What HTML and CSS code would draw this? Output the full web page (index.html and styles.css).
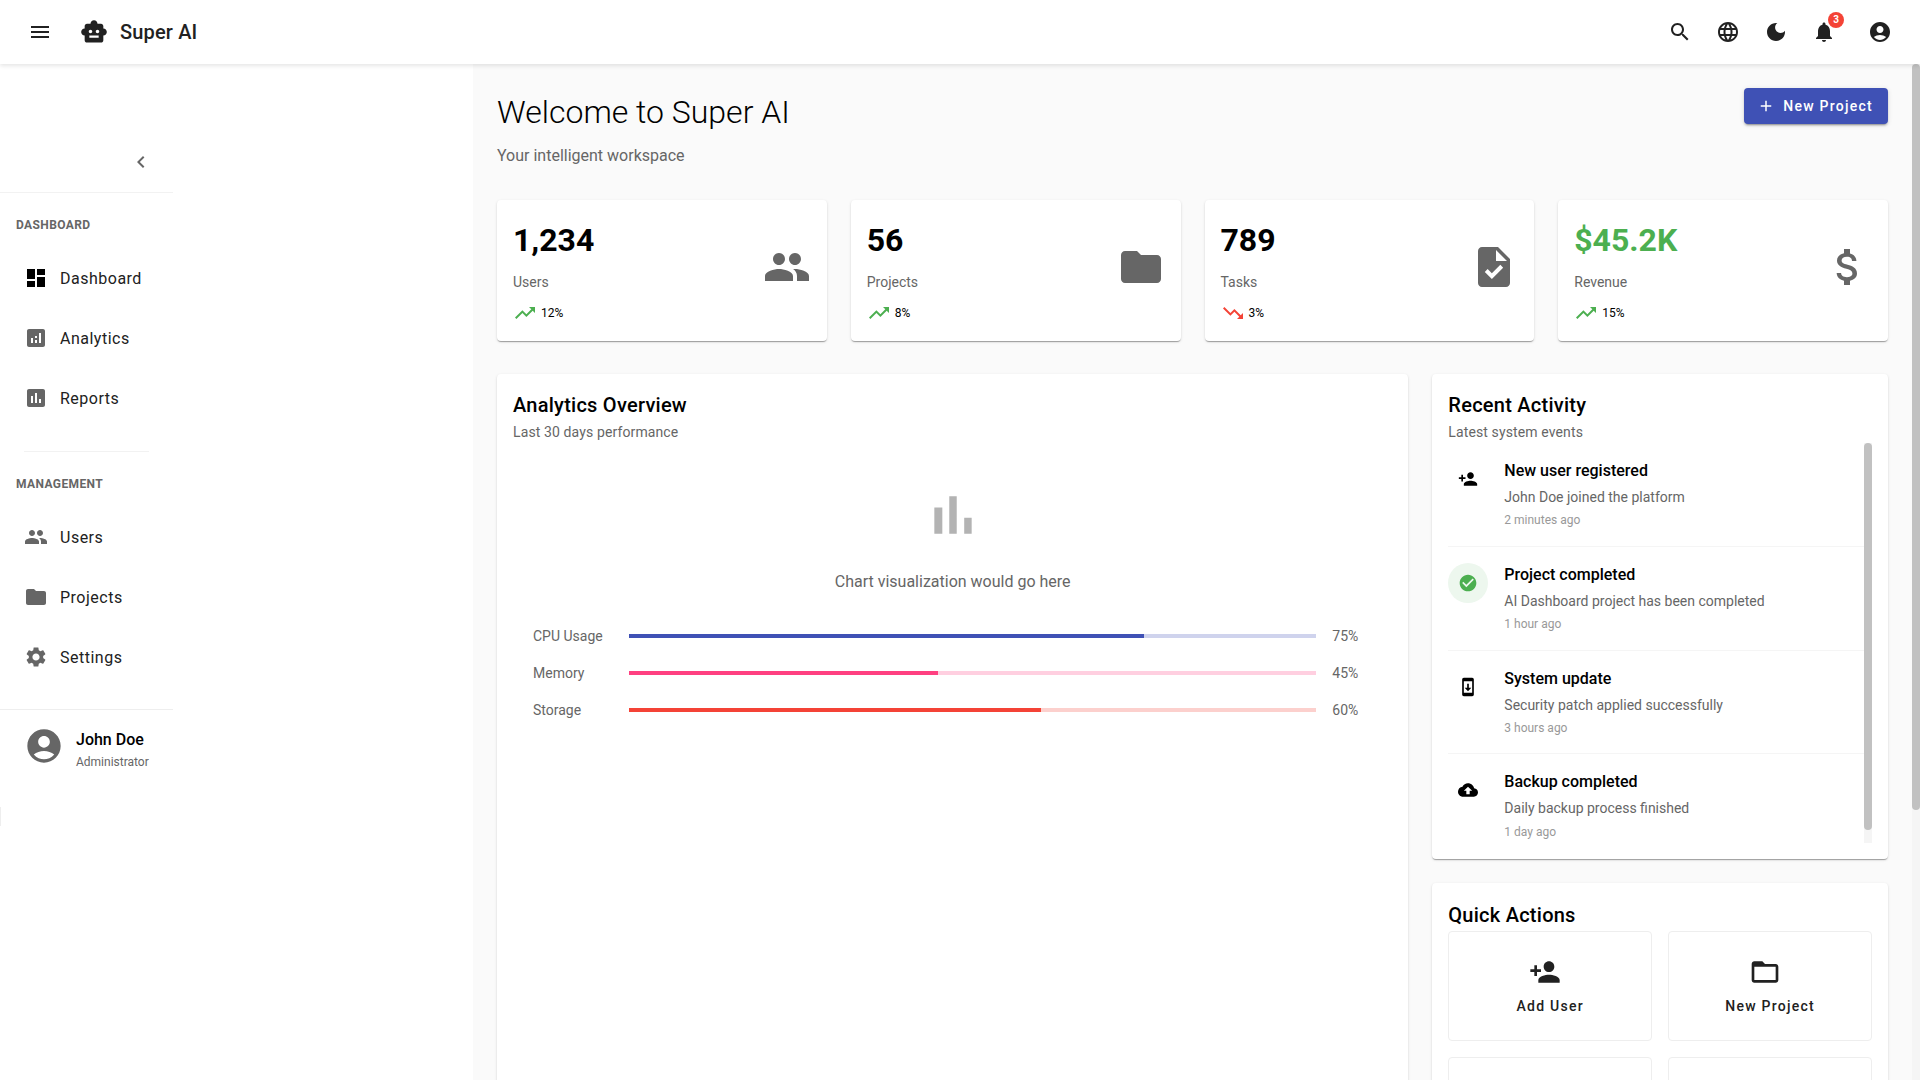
FILE: index.html
```html
<!DOCTYPE html>
<html lang="en">
<head>
    <meta charset="UTF-8">
    <meta name="viewport" content="width=device-width, initial-scale=1.0">
    <title>Super AI</title>
    <link rel="stylesheet" href="styles.css">
</head>
<body>
    <svg class="icon-defs" aria-hidden="true">
        <symbol id="i-menu" viewBox="0 0 24 24"><path d="M3 18h18v-2H3v2zm0-5h18v-2H3v2zm0-7v2h18V6H3z"/></symbol>
        <symbol id="i-robot" viewBox="0 0 24 24"><path d="M20 9V7c0-1.1-.9-2-2-2h-3c0-1.66-1.34-3-3-3S9 3.34 9 5H6c-1.1 0-2 .9-2 2v2c-1.66 0-3 1.34-3 3s1.34 3 3 3v4c0 1.1.9 2 2 2h12c1.1 0 2-.9 2-2v-4c1.66 0 3-1.34 3-3s-1.34-3-3-3zM7.5 11.5c0-.83.67-1.5 1.5-1.5s1.5.67 1.5 1.5S9.83 13 9 13s-1.5-.67-1.5-1.5zM16 17H8v-2h8v2zm-1-4c-.83 0-1.5-.67-1.5-1.5S14.17 10 15 10s1.5.67 1.5 1.5S15.83 13 15 13z"/></symbol>
        <symbol id="i-search" viewBox="0 0 24 24"><path d="M15.5 14h-.79l-.28-.27C15.41 12.59 16 11.11 16 9.5 16 5.91 13.09 3 9.5 3S3 5.91 3 9.5 5.91 16 9.5 16c1.61 0 3.09-.59 4.23-1.57l.27.28v.79l5 4.99L20.49 19l-4.99-5zm-6 0C7.01 14 5 11.99 5 9.5S7.01 5 9.5 5 14 7.01 14 9.5 11.99 14 9.5 14z"/></symbol>
        <symbol id="i-language" viewBox="0 0 24 24"><path d="M11.99 2C6.47 2 2 6.48 2 12s4.47 10 9.99 10C17.52 22 22 17.52 22 12S17.52 2 11.99 2zm6.93 6h-2.95c-.32-1.25-.78-2.45-1.38-3.56 1.84.63 3.37 1.91 4.33 3.56zM12 4.04c.83 1.2 1.48 2.53 1.91 3.96h-3.82c.43-1.43 1.08-2.76 1.91-3.96zM4.26 14C4.1 13.36 4 12.69 4 12s.1-1.36.26-2h3.38c-.08.66-.14 1.32-.14 2 0 .68.06 1.34.14 2H4.26zm.82 2h2.95c.32 1.25.78 2.45 1.38 3.56-1.84-.63-3.37-1.9-4.33-3.56zm2.95-8H5.08c.96-1.66 2.49-2.93 4.33-3.56C8.81 5.55 8.35 6.75 8.03 8zM12 19.96c-.83-1.2-1.48-2.53-1.91-3.96h3.82c-.43 1.43-1.08 2.76-1.91 3.96zM14.34 14H9.66c-.09-.66-.16-1.32-.16-2 0-.68.07-1.35.16-2h4.68c.09.65.16 1.32.16 2 0 .68-.07 1.34-.16 2zm.25 5.56c.6-1.11 1.06-2.31 1.38-3.56h2.95c-.96 1.65-2.49 2.93-4.33 3.56zM16.36 14c.08-.66.14-1.32.14-2 0-.68-.06-1.34-.14-2h3.38c.16.64.26 1.31.26 2s-.1 1.36-.26 2h-3.38z"/></symbol>
        <symbol id="i-moon" viewBox="0 0 24 24"><path d="M12 3c-4.97 0-9 4.03-9 9s4.03 9 9 9 9-4.03 9-9c0-.46-.04-.92-.1-1.36-.98 1.37-2.58 2.26-4.4 2.26-2.98 0-5.4-2.42-5.4-5.4 0-1.81.89-3.42 2.26-4.4-.44-.06-.9-.1-1.36-.1z"/></symbol>
        <symbol id="i-bell" viewBox="0 0 24 24"><path d="M12 22c1.1 0 2-.9 2-2h-4c0 1.1.89 2 2 2zm6-6v-5c0-3.07-1.64-5.64-4.5-6.32V4c0-.83-.67-1.5-1.5-1.5s-1.5.67-1.5 1.5v.68C7.63 5.36 6 7.92 6 11v5l-2 2v1h16v-1l-2-2z"/></symbol>
        <symbol id="i-account" viewBox="0 0 24 24"><path d="M12 2C6.48 2 2 6.48 2 12s4.48 10 10 10 10-4.48 10-10S17.52 2 12 2zm0 4c1.93 0 3.5 1.57 3.5 3.5S13.93 13 12 13s-3.5-1.57-3.5-3.5S10.07 6 12 6zm0 14c-2.03 0-4.43-.82-6.14-2.88C7.55 15.8 9.68 15 12 15s4.45.8 6.14 2.12C16.43 19.18 14.03 20 12 20z"/></symbol>
        <symbol id="i-chevron" viewBox="0 0 24 24"><path d="M15.41 7.41L14 6l-6 6 6 6 1.41-1.41L10.83 12z"/></symbol>
        <symbol id="i-dashboard" viewBox="0 0 24 24"><path d="M3 13h8V3H3v10zm0 8h8v-6H3v6zm10 0h8V11h-8v10zm0-18v6h8V3h-8z"/></symbol>
        <symbol id="i-analytics" viewBox="0 0 24 24"><path d="M19 3H5c-1.1 0-2 .9-2 2v14c0 1.1.9 2 2 2h14c1.1 0 2-.9 2-2V5c0-1.1-.9-2-2-2zM9 17H7v-5h2v5zm4 0h-2v-3h2v3zm0-5h-2v-2h2v2zm4 5h-2V7h2v10z"/></symbol>
        <symbol id="i-reports" viewBox="0 0 24 24"><path d="M19 3H5c-1.1 0-2 .9-2 2v14c0 1.1.9 2 2 2h14c1.1 0 2-.9 2-2V5c0-1.1-.9-2-2-2zM9 17H7v-7h2v7zm4 0h-2V7h2v10zm4 0h-2v-4h2v4z"/></symbol>
        <symbol id="i-people" viewBox="0 0 24 24"><path d="M16 11c1.66 0 2.99-1.34 2.99-3S17.66 5 16 5c-1.66 0-3 1.34-3 3s1.34 3 3 3zm-8 0c1.66 0 2.99-1.34 2.99-3S9.66 5 8 5C6.34 5 5 6.34 5 8s1.34 3 3 3zm0 2c-2.33 0-7 1.17-7 3.5V19h14v-2.5c0-2.33-4.67-3.5-7-3.5zm8 0c-.29 0-.62.02-.97.05 1.16.84 1.97 1.97 1.97 3.45V19h6v-2.5c0-2.33-4.67-3.5-7-3.5z"/></symbol>
        <symbol id="i-folder" viewBox="0 0 24 24"><path d="M10 4H4c-1.1 0-1.99.9-1.99 2L2 18c0 1.1.9 2 2 2h16c1.1 0 2-.9 2-2V8c0-1.1-.9-2-2-2h-8l-2-2z"/></symbol>
        <symbol id="i-folder-open" viewBox="0 0 24 24"><path d="M20 6h-8l-2-2H4c-1.1 0-1.99.9-1.99 2L2 18c0 1.1.9 2 2 2h16c1.1 0 2-.9 2-2V8c0-1.1-.9-2-2-2zm0 12H4V8h16v10z"/></symbol>
        <symbol id="i-settings" viewBox="0 0 24 24"><path d="M19.14 12.94c.04-.3.06-.61.06-.94 0-.32-.02-.64-.07-.94l2.03-1.58c.18-.14.23-.41.12-.61l-1.92-3.32c-.12-.22-.37-.29-.59-.22l-2.39.96c-.5-.38-1.03-.7-1.62-.94l-.36-2.54c-.04-.24-.24-.41-.48-.41h-3.84c-.24 0-.43.17-.47.41l-.36 2.54c-.59.24-1.13.57-1.62.94l-2.39-.96c-.22-.08-.47 0-.59.22L2.74 8.87c-.12.21-.08.47.12.61l2.03 1.58c-.05.3-.09.63-.09.94s.02.64.07.94l-2.03 1.58c-.18.14-.23.41-.12.61l1.92 3.32c.12.22.37.29.59.22l2.39-.96c.5.38 1.03.7 1.62.94l.36 2.54c.05.24.24.41.48.41h3.84c.24 0 .44-.17.47-.41l.36-2.54c.59-.24 1.13-.56 1.62-.94l2.39.96c.22.08.47 0 .59-.22l1.92-3.32c.12-.22.07-.47-.12-.61l-2.01-1.58zM12 15.6c-1.98 0-3.6-1.62-3.6-3.6s1.62-3.6 3.6-3.6 3.6 1.62 3.6 3.6-1.62 3.6-3.6 3.6z"/></symbol>
        <symbol id="i-up" viewBox="0 0 24 24"><path d="M16 6l2.29 2.29-4.88 4.88-4-4L2 16.59 3.41 18l6-6 4 4 6.3-6.29L22 12V6z"/></symbol>
        <symbol id="i-down" viewBox="0 0 24 24"><path d="M16 18l2.29-2.29-4.88-4.88-4 4L2 7.41 3.41 6l6 6 4-4 6.3 6.29L22 12v6z"/></symbol>
        <symbol id="i-task" viewBox="0 0 24 24"><path d="M14 2H6c-1.1 0-2 .9-2 2v16c0 1.1.89 2 1.99 2H18c1.1 0 2-.9 2-2V8l-6-6zm-3.06 16L7.4 14.46l1.41-1.41 2.12 2.12 4.24-4.24 1.41 1.41L10.94 18zM13 9V3.5L18.5 9H13z"/></symbol>
        <symbol id="i-money" viewBox="0 0 24 24"><path d="M11.8 10.9c-2.27-.59-3-1.2-3-2.15 0-1.09 1.01-1.85 2.7-1.85 1.78 0 2.44.85 2.5 2.1h2.21c-.07-1.72-1.12-3.3-3.21-3.81V3h-3v2.16c-1.94.42-3.5 1.68-3.5 3.61 0 2.31 1.91 3.46 4.7 4.13 2.5.6 3 1.48 3 2.41 0 .69-.49 1.79-2.7 1.79-2.06 0-2.87-.92-2.98-2.1h-2.2c.12 2.19 1.76 3.42 3.68 3.83V21h3v-2.15c1.95-.37 3.5-1.5 3.5-3.55 0-2.84-2.43-3.81-4.7-4.4z"/></symbol>
        <symbol id="i-bars" viewBox="0 0 24 24"><path d="M5 9.2h3V19H5zM10.6 5h2.8v14h-2.8zm5.6 8H19v6h-2.8z"/></symbol>
        <symbol id="i-person-add" viewBox="0 0 24 24"><path d="M15 12c2.21 0 4-1.79 4-4s-1.79-4-4-4-4 1.79-4 4 1.79 4 4 4zm-9-2V7H4v3H1v2h3v3h2v-3h3v-2H6zm9 4c-2.67 0-8 1.34-8 4v2h16v-2c0-2.66-5.33-4-8-4z"/></symbol>
        <symbol id="i-check" viewBox="0 0 24 24"><path d="M12 2C6.48 2 2 6.48 2 12s4.48 10 10 10 10-4.48 10-10S17.52 2 12 2zm-2 15l-5-5 1.41-1.41L10 14.17l7.59-7.59L19 8l-9 9z"/></symbol>
        <symbol id="i-update" viewBox="0 0 24 24"><path d="M17 1.01L7 1c-1.1 0-2 .9-2 2v18c0 1.1.9 2 2 2h10c1.1 0 2-.9 2-2V3c0-1.1-.9-1.99-2-1.99zM17 19H7V5h10v14zm-1-6h-3V8h-2v5H8l4 4 4-4z"/></symbol>
        <symbol id="i-backup" viewBox="0 0 24 24"><path d="M19.35 10.04C18.67 6.59 15.64 4 12 4 9.11 4 6.6 5.64 5.35 8.04 2.34 8.36 0 10.91 0 14c0 3.31 2.69 6 6 6h13c2.76 0 5-2.24 5-5 0-2.64-2.05-4.78-4.65-4.96zM14 13v4h-4v-4H7l5-5 5 5h-3z"/></symbol>
        <symbol id="i-add" viewBox="0 0 24 24"><path d="M19 13h-6v6h-2v-6H5v-2h6V5h2v6h6v2z"/></symbol>
    </svg>

    <header class="toolbar">
        <button class="icon-btn"><svg class="icon"><use href="#i-menu"/></svg></button>
        <svg class="logo"><use href="#i-robot"/></svg>
        <span class="app-name">Super AI</span>
        <div class="toolbar-actions">
            <button class="icon-btn"><svg class="icon"><use href="#i-search"/></svg></button>
            <button class="icon-btn"><svg class="icon"><use href="#i-language"/></svg></button>
            <button class="icon-btn"><svg class="icon"><use href="#i-moon"/></svg></button>
            <button class="icon-btn">
                <svg class="icon"><use href="#i-bell"/></svg>
                <span class="badge">3</span>
            </button>
            <button class="icon-btn account-btn"><svg class="icon"><use href="#i-account"/></svg></button>
        </div>
    </header>

    <div class="layout">
        <aside class="sidebar">
            <div class="sidebar-inner">
                <div class="sidebar-top">
                    <svg class="icon chevron"><use href="#i-chevron"/></svg>
                </div>

                <div class="nav-label first">Dashboard</div>
                <a class="nav-item active"><svg class="icon"><use href="#i-dashboard"/></svg>Dashboard</a>
                <a class="nav-item"><svg class="icon"><use href="#i-analytics"/></svg>Analytics</a>
                <a class="nav-item"><svg class="icon"><use href="#i-reports"/></svg>Reports</a>

                <div class="nav-divider"></div>

                <div class="nav-label">Management</div>
                <a class="nav-item"><svg class="icon"><use href="#i-people"/></svg>Users</a>
                <a class="nav-item"><svg class="icon"><use href="#i-folder"/></svg>Projects</a>
                <a class="nav-item"><svg class="icon"><use href="#i-settings"/></svg>Settings</a>

                <div class="user-box">
                    <svg class="avatar"><use href="#i-account"/></svg>
                    <div class="user-text">
                        <div class="user-name">John Doe</div>
                        <div class="user-role">Administrator</div>
                    </div>
                </div>
            </div>
            <div class="sidebar-edge"></div>
        </aside>

        <main class="main">
            <div class="main-inner">
                <div class="page-header">
                    <div>
                        <h1>Welcome to Super AI</h1>
                        <p class="page-sub">Your intelligent workspace</p>
                    </div>
                    <button class="primary-btn"><svg class="btn-icon"><use href="#i-add"/></svg>New Project</button>
                </div>

                <div class="stats">
                    <div class="card stat-card">
                        <div>
                            <div class="stat-value">1,234</div>
                            <div class="stat-label">Users</div>
                            <div class="stat-trend"><svg class="icon up"><use href="#i-up"/></svg>12%</div>
                        </div>
                        <svg class="stat-icon"><use href="#i-people"/></svg>
                    </div>
                    <div class="card stat-card">
                        <div>
                            <div class="stat-value">56</div>
                            <div class="stat-label">Projects</div>
                            <div class="stat-trend"><svg class="icon up"><use href="#i-up"/></svg>8%</div>
                        </div>
                        <svg class="stat-icon"><use href="#i-folder"/></svg>
                    </div>
                    <div class="card stat-card">
                        <div>
                            <div class="stat-value">789</div>
                            <div class="stat-label">Tasks</div>
                            <div class="stat-trend"><svg class="icon down"><use href="#i-down"/></svg>3%</div>
                        </div>
                        <svg class="stat-icon"><use href="#i-task"/></svg>
                    </div>
                    <div class="card stat-card">
                        <div>
                            <div class="stat-value green">$45.2K</div>
                            <div class="stat-label">Revenue</div>
                            <div class="stat-trend"><svg class="icon up"><use href="#i-up"/></svg>15%</div>
                        </div>
                        <svg class="stat-icon"><use href="#i-money"/></svg>
                    </div>
                </div>

                <div class="dash-grid">
                    <section class="card panel">
                        <h2>Analytics Overview</h2>
                        <p class="panel-sub">Last 30 days performance</p>
                        <div class="chart-empty">
                            <svg class="chart-icon"><use href="#i-bars"/></svg>
                            <p>Chart visualization would go here</p>
                        </div>
                        <div class="metrics">
                            <span>CPU Usage</span>
                            <div class="track blue"><div class="fill" style="width: 75%"></div></div>
                            <span>75%</span>
                            <span>Memory</span>
                            <div class="track pink"><div class="fill" style="width: 45%"></div></div>
                            <span>45%</span>
                            <span>Storage</span>
                            <div class="track red"><div class="fill" style="width: 60%"></div></div>
                            <span>60%</span>
                        </div>
                    </section>

                    <div class="side-col">
                        <section class="card panel">
                            <h2>Recent Activity</h2>
                            <p class="panel-sub">Latest system events</p>
                            <div class="activity-wrap">
                                <ul class="activity">
                                    <li>
                                        <span class="activity-icon"><svg><use href="#i-person-add"/></svg></span>
                                        <div>
                                            <div class="activity-title">New user registered</div>
                                            <div class="activity-desc">John Doe joined the platform</div>
                                            <div class="activity-time">2 minutes ago</div>
                                        </div>
                                    </li>
                                    <li>
                                        <span class="activity-icon done"><svg><use href="#i-check"/></svg></span>
                                        <div>
                                            <div class="activity-title">Project completed</div>
                                            <div class="activity-desc">AI Dashboard project has been completed</div>
                                            <div class="activity-time">1 hour ago</div>
                                        </div>
                                    </li>
                                    <li>
                                        <span class="activity-icon"><svg><use href="#i-update"/></svg></span>
                                        <div>
                                            <div class="activity-title">System update</div>
                                            <div class="activity-desc">Security patch applied successfully</div>
                                            <div class="activity-time">3 hours ago</div>
                                        </div>
                                    </li>
                                    <li>
                                        <span class="activity-icon"><svg><use href="#i-backup"/></svg></span>
                                        <div>
                                            <div class="activity-title">Backup completed</div>
                                            <div class="activity-desc">Daily backup process finished</div>
                                            <div class="activity-time">1 day ago</div>
                                        </div>
                                    </li>
                                </ul>
                                <div class="scrollbar"><div class="thumb list-thumb"></div></div>
                            </div>
                        </section>

                        <section class="card panel quick">
                            <h2>Quick Actions</h2>
                            <div class="actions">
                                <button class="action"><svg><use href="#i-person-add"/></svg>Add User</button>
                                <button class="action"><svg><use href="#i-folder-open"/></svg>New Project</button>
                                <button class="action"></button>
                                <button class="action"></button>
                            </div>
                        </section>
                    </div>
                </div>
            </div>
        </main>
        <div class="scrollbar"><div class="thumb page-thumb"></div></div>
    </div>
</body>
</html>
```

FILE: styles.css
```css
* {
    box-sizing: border-box;
}

body {
    margin: 0;
    height: 100vh;
    overflow: hidden;
    display: flex;
    flex-direction: column;
    font-family: Roboto, Arial, sans-serif;
    color: #212121;
    background-color: #fafafa;
}

h1, h2, p, ul {
    margin: 0;
    padding: 0;
}

button {
    font-family: inherit;
    border: none;
    background: none;
    padding: 0;
    color: inherit;
}

.icon-defs {
    display: none;
}

.icon {
    width: 24px;
    height: 24px;
    fill: currentColor;
    flex-shrink: 0;
}

/* drawn scrollbars */
.scrollbar {
    width: 8px;
    flex-shrink: 0;
    background-color: #f5f5f5;
}

.thumb {
    background-color: #c1c1c1;
    border-radius: 4px;
}

.page-thumb {
    height: 746px;
}

.list-thumb {
    height: 387px;
}

/* toolbar */
.toolbar {
    position: relative;
    z-index: 2;
    display: flex;
    align-items: center;
    flex-shrink: 0;
    height: 64px;
    padding: 0 16px;
    background-color: #fff;
    box-shadow: 0 2px 4px rgba(0, 0, 0, 0.1);
}

.icon-btn {
    position: relative;
    display: flex;
    align-items: center;
    justify-content: center;
    width: 48px;
    height: 48px;
}

.logo {
    width: 28px;
    height: 28px;
    fill: #212121;
    margin-left: 16px;
}

.app-name {
    margin-left: 12px;
    font-size: 20px;
    font-weight: 500;
    letter-spacing: 0.15px;
}

.toolbar-actions {
    display: flex;
    margin-left: auto;
}

.account-btn {
    margin-left: 8px;
}

.badge {
    position: absolute;
    top: 4px;
    right: 4px;
    width: 16px;
    height: 16px;
    border-radius: 50%;
    background-color: #f44336;
    color: #fff;
    font-size: 10px;
    font-weight: 700;
    line-height: 16px;
    text-align: center;
}

/* sidebar */
.layout {
    display: flex;
    flex: 1;
    min-height: 0;
}

.sidebar {
    position: relative;
    width: 473px;
    flex-shrink: 0;
    background-color: #fff;
}

.sidebar-inner {
    width: 173px;
}

.sidebar-edge {
    position: absolute;
    left: 0;
    top: 743px;
    width: 1px;
    height: 19px;
    background-color: #eee;
}

.sidebar-top {
    display: flex;
    justify-content: flex-end;
    align-items: flex-end;
    height: 129px;
    padding: 0 20px 18px 0;
    border-bottom: 1px solid #f2f2f2;
}

.chevron {
    color: #666;
}

.nav-label {
    margin: 24px 0 15px;
    padding-left: 16px;
    font-size: 12px;
    font-weight: 700;
    line-height: 16px;
    letter-spacing: 0.4px;
    color: #666;
    text-transform: uppercase;
}

.nav-item {
    display: flex;
    align-items: center;
    gap: 12px;
    height: 60px;
    padding-left: 24px;
    font-size: 16px;
    letter-spacing: 0.5px;
    color: #212121;
}

.nav-item .icon {
    color: #666;
}

.nav-item.active .icon {
    color: #000;
}

.nav-divider {
    height: 1px;
    margin: 23px 24px 0;
    background-color: #f2f2f2;
}

.user-box {
    display: flex;
    align-items: flex-start;
    gap: 12px;
    margin-top: 22px;
    padding: 16px 0 16px 24px;
    border-top: 1px solid #eee;
}

.avatar {
    width: 40px;
    height: 40px;
    fill: #666;
    flex-shrink: 0;
}

.user-text {
    padding-top: 4px;
}

.user-name {
    font-size: 16px;
    font-weight: 500;
    line-height: 20px;
    color: #000;
}

.user-role {
    margin-top: 4px;
    font-size: 12px;
    line-height: 16px;
    color: #666;
}

/* main area */
.main {
    flex: 1;
    min-width: 0;
    overflow: hidden;
}

.main-inner {
    display: flex;
    flex-direction: column;
    min-height: 1384px;
    padding: 24px;
}

.page-header {
    display: flex;
    justify-content: space-between;
    align-items: flex-start;
    margin-bottom: 32px;
}

h1 {
    font-size: 32px;
    font-weight: 300;
    line-height: 48px;
    color: #000;
}

.page-sub {
    margin-top: 8px;
    font-size: 16px;
    line-height: 24px;
    color: #666;
}

.primary-btn {
    display: flex;
    align-items: center;
    gap: 8px;
    height: 36px;
    padding: 0 15px 0 13px;
    border-radius: 4px;
    background-color: #3f51b5;
    color: #fff;
    font-size: 14px;
    font-weight: 500;
    letter-spacing: 1.25px;
    box-shadow: 0 3px 1px -2px rgba(0, 0, 0, 0.2), 0 2px 2px rgba(0, 0, 0, 0.14), 0 1px 5px rgba(0, 0, 0, 0.12);
}

.btn-icon {
    width: 18px;
    height: 18px;
    fill: #fff;
}

.card {
    background-color: #fff;
    border-radius: 4px;
    box-shadow: 0 2px 1px -1px rgba(0, 0, 0, 0.2), 0 1px 1px rgba(0, 0, 0, 0.14), 0 1px 3px rgba(0, 0, 0, 0.12);
}

/* stat cards */
.stats {
    display: grid;
    grid-template-columns: repeat(4, 1fr);
    gap: 24px;
    margin-bottom: 33px;
}

.stat-card {
    display: flex;
    justify-content: space-between;
    align-items: center;
    padding: 16px;
}

.stat-value {
    font-size: 32px;
    font-weight: 700;
    line-height: 48px;
    color: #000;
}

.stat-value.green {
    color: #4caf50;
}

.stat-label {
    margin-top: 8px;
    font-size: 14px;
    line-height: 20px;
    color: #666;
}

.stat-trend {
    display: flex;
    align-items: center;
    gap: 4px;
    margin-top: 9px;
    font-size: 12px;
    color: #000;
}

.up {
    color: #4caf50;
}

.down {
    color: #f44336;
}

.stat-icon {
    width: 48px;
    height: 48px;
    fill: #666;
    margin-bottom: 8px;
}

/* panels */
.dash-grid {
    display: grid;
    grid-template-columns: 2fr 1fr;
    gap: 24px;
    flex: 1;
    align-items: stretch;
}

.side-col {
    display: flex;
    flex-direction: column;
    gap: 24px;
}

.panel {
    padding: 16px;
}

h2 {
    font-size: 20px;
    font-weight: 500;
    line-height: 30px;
    letter-spacing: 0.25px;
    color: #000;
}

.panel-sub {
    margin-top: 2px;
    font-size: 14px;
    line-height: 20px;
    letter-spacing: 0.12px;
    color: #666;
}

.chart-empty {
    display: flex;
    flex-direction: column;
    align-items: center;
    margin-top: 41px;
    color: #666;
    font-size: 16px;
    line-height: 24px;
}

.chart-icon {
    width: 64px;
    height: 64px;
    fill: #b3b3b3;
}

.chart-empty p {
    margin-top: 23px;
}

.metrics {
    display: grid;
    grid-template-columns: 80px 1fr 40px;
    column-gap: 16px;
    row-gap: 16px;
    align-items: center;
    margin: 32px 20px 0;
    font-size: 14px;
    line-height: 21px;
    color: #666;
}

.track {
    height: 4px;
    margin-bottom: 1px;
}

.fill {
    height: 100%;
}

.track.blue {
    background-color: #cfd3ed;
}

.track.blue .fill {
    background-color: #3f51b5;
}

.track.pink {
    background-color: #ffcfe0;
}

.track.pink .fill {
    background-color: #ff4081;
}

.track.red {
    background-color: #fcd0cd;
}

.track.red .fill {
    background-color: #f44336;
}

/* activity list */
.activity-wrap {
    display: flex;
    height: 400px;
    margin-top: 1.15px;
}

.activity {
    flex: 1;
    min-width: 0;
    list-style: none;
    overflow: hidden;
}

.activity li {
    display: flex;
    gap: 16px;
    padding: 16px 0;
    border-bottom: 1px solid #f5f5f5;
}

.activity li:last-child {
    border-bottom: none;
}

.activity-icon {
    display: flex;
    align-items: center;
    justify-content: center;
    width: 40px;
    height: 40px;
    border-radius: 50%;
    flex-shrink: 0;
}

.activity-icon svg {
    width: 20px;
    height: 20px;
    fill: #000;
}

.activity-icon.done {
    background-color: #edf7ee;
}

.activity-icon.done svg {
    fill: #4caf50;
}

.activity-title {
    font-size: 16px;
    font-weight: 500;
    line-height: 23px;
    color: #000;
}

.activity-desc {
    margin-top: 5px;
    font-size: 14px;
    line-height: 20.3px;
    color: #666;
}

.activity-time {
    margin-top: 4px;
    font-size: 12px;
    line-height: 18.4px;
    color: #999;
}

/* quick actions */
.quick h2 {
    margin-top: 1px;
}

.actions {
    display: grid;
    grid-template-columns: 1fr 1fr;
    gap: 16px;
    margin-top: 1px;
}

.action {
    display: flex;
    flex-direction: column;
    align-items: center;
    justify-content: flex-start;
    height: 110px;
    padding-top: 24px;
    border: 1px solid #eee;
    border-radius: 4px;
    font-size: 14px;
    font-weight: 500;
    letter-spacing: 1.25px;
    color: #212121;
}

.action svg {
    width: 32px;
    height: 32px;
    fill: #212121;
    margin: 0 10px 10px 0;
}
```
